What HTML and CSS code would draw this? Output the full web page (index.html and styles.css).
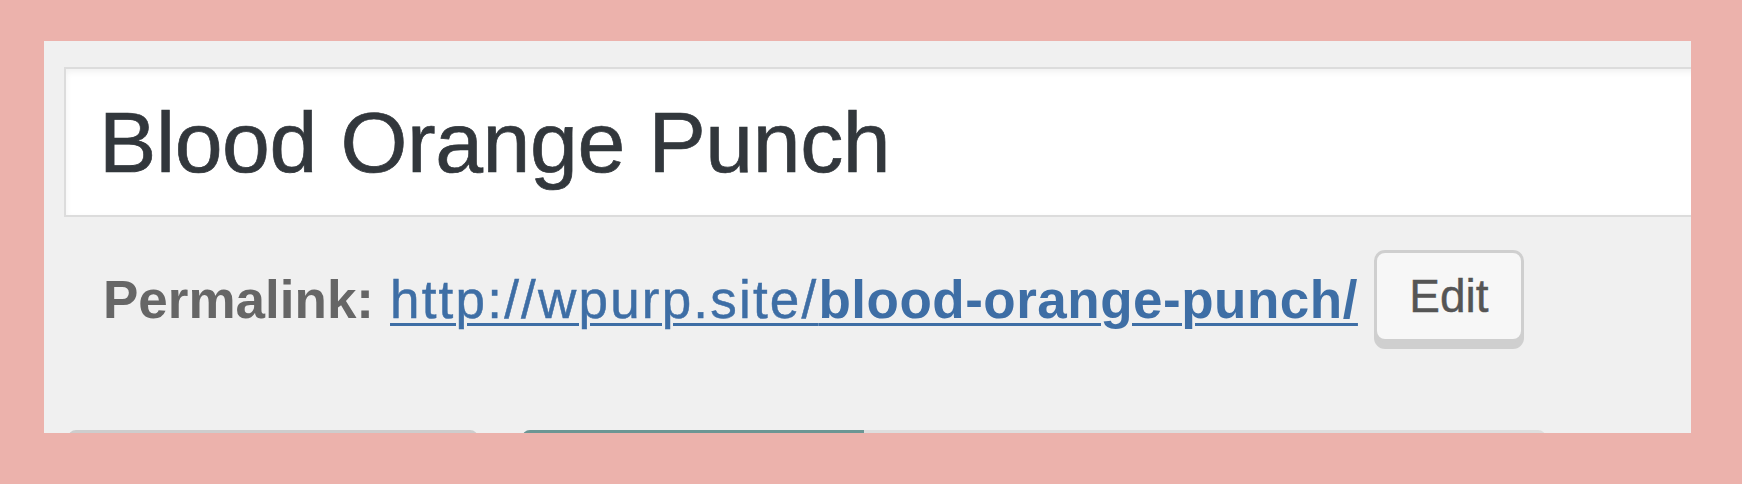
FILE: index.html
```html
<!DOCTYPE html>
<html lang="en">
<head>
  <meta charset="UTF-8">
  <title>Edit Recipe</title>
  <link rel="stylesheet" href="styles.css">
</head>
<body>
  <div class="panel">
    <div class="title-box">
      <span class="title-text">Blood Orange Punch</span>
    </div>

    <div class="permalink">
      <strong class="permalink-label">Permalink:</strong>
      <a class="permalink-url" href="#">http://wpurp.site/<b>blood-orange-punch/</b></a>
      <button class="edit-btn">Edit</button>
    </div>

    <div class="boxes">
      <div class="box box-plain"></div>
      <div class="box box-tabs">
        <span class="tab-active"></span>
      </div>
    </div>
  </div>
</body>
</html>
```

FILE: styles.css
```css
/* Page */
* {
  box-sizing: border-box;
}
body {
  margin: 0;
  padding: 41px 0 0 44px;
  background: #ecb2ac;
  font-family: 'Liberation Sans', Arial, sans-serif;
  height: 484px;
  overflow: hidden;
}
.panel {
  width: 1647px;
  height: 392px;
  background: #f0f0f0;
  overflow: hidden;
  padding-top: 26px;
}
/* Title field */
.title-box {
  margin-left: 20px;
  width: 1700px;
  height: 150px;
  background: #fff;
  border: 2px solid #dcdcdc;
  box-shadow: inset 0 3px 6px rgba(0, 0, 0, 0.06);
  display: flex;
  align-items: center;
  padding-left: 33px;
}
.title-text {
  font-size: 86px;
  color: #32373c;
  letter-spacing: -0.4px;
  -webkit-text-stroke: 0.7px #32373c;
}
/* Permalink row */
.permalink {
  margin-top: 33px;
  padding-left: 59px;
  display: flex;
  align-items: center;
  height: 92px;
  font-size: 53px;
}
.permalink-label {
  color: #666;
  font-weight: bold;
  margin-right: 16px;
  margin-top: 6px;
}
.permalink-url {
  color: #3e6ea5;
  text-decoration: underline;
  text-decoration-thickness: 3px;
  text-underline-offset: 5px;
  letter-spacing: 2.2px;
  -webkit-text-stroke: 0.5px #3e6ea5;
  margin-top: 6px;
}
.permalink-url b {
  font-weight: bold;
  letter-spacing: 0.5px;
  -webkit-text-stroke: 0;
}
.edit-btn {
  margin-left: 16px;
  width: 150px;
  height: 92px;
  background: #f7f7f7;
  border: 3px solid #cfcfcf;
  border-radius: 11px;
  box-shadow: 0 7px 0 #cfcfcf;
  font-family: 'Liberation Sans', Arial, sans-serif;
  font-size: 46px;
  color: #555;
  padding: 0;
  -webkit-text-stroke: 0.4px #555;
}
/* Boxes peeking below */
.boxes {
  margin-top: 88px;
  display: flex;
  gap: 44px;
  padding-left: 24px;
}
.box {
  height: 20px;
  border-radius: 8px 8px 0 0;
}
.box-plain {
  width: 410px;
  background: #cdcdcd;
}
.box-tabs {
  width: 1024px;
  background: #dedede;
  display: flex;
}
.tab-active {
  width: 342px;
  background: #6b9694;
  border-radius: 8px 0 0 0;
}
```
